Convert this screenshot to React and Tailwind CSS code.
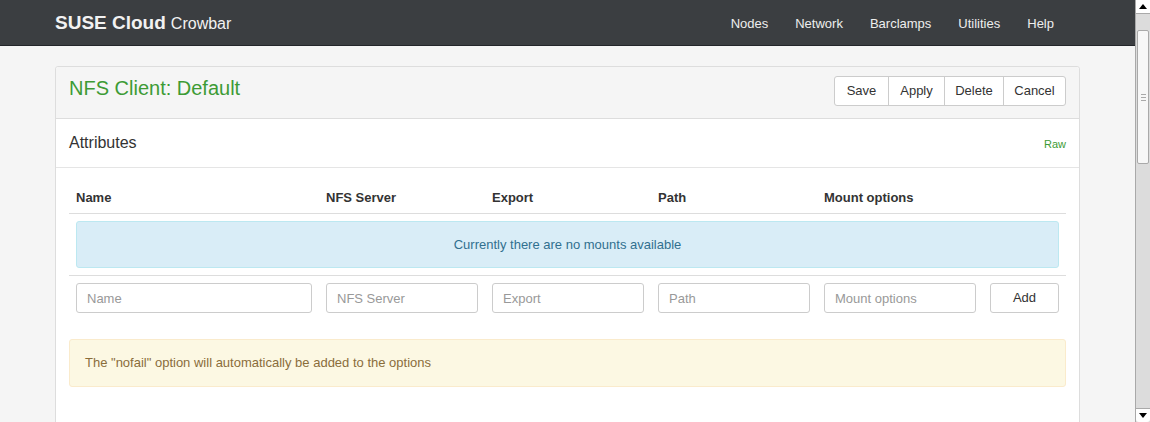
import React from 'react';

const navLinks = ['Nodes', 'Network', 'Barclamps', 'Utilities', 'Help'];

const columns = [
    { label: 'Name', width: 'w-[250px]' },
    { label: 'NFS Server', width: 'w-[166px]' },
    { label: 'Export', width: 'w-[166px]' },
    { label: 'Path', width: 'w-[166px]' },
    { label: 'Mount options', width: 'w-[166px]' },
];

const Scrollbar = () => (
    <div className="w-[15px] h-full flex flex-col bg-[#dcdcdc] border-l border-[#a9a9a9]">
        <div className="h-[14px] bg-white border-b border-[#a9a9a9] flex items-center justify-center">
            <div className="w-0 h-0 border-l-[4px] border-r-[4px] border-b-[5px] border-l-transparent border-r-transparent border-b-black" />
        </div>
        <div className="h-[16px]" />
        <div className="h-[134px] mx-[1px] bg-[#f7f7f7] border border-[#a9a9a9] rounded-[2px] flex flex-col items-center justify-center gap-[2px]">
            <div className="w-[5px] h-px bg-[#a9a9a9]" />
            <div className="w-[5px] h-px bg-[#a9a9a9]" />
            <div className="w-[5px] h-px bg-[#a9a9a9]" />
        </div>
        <div className="flex-1" />
        <div className="h-[14px] bg-white border-t border-[#a9a9a9] rounded-b-[3px] flex items-center justify-center">
            <div className="w-0 h-0 border-l-[4px] border-r-[4px] border-t-[5px] border-l-transparent border-r-transparent border-t-black" />
        </div>
    </div>
);

const App = () => {
    return (
        <div className="h-screen flex overflow-hidden bg-[#f5f5f5] font-['Liberation_Sans',Arial,sans-serif] text-[13px] text-[#333]">
            <div className="flex-1 overflow-hidden">
                <div className="h-[46px] bg-[#3b3e41] border-b border-[#23262a]">
                    <div className="w-[1025px] mx-auto h-full pt-[2px] flex items-center justify-between">
                        <div className="flex items-baseline text-[#f2f2f2]">
                            <span className="text-[19px] font-bold">SUSE Cloud</span>
                            <span className="text-[16px] ml-[5px]">Crowbar</span>
                        </div>
                        <div className="flex gap-[27px] pr-[26px] text-[13px] text-[#eeeeee]">
                            {navLinks.map((link) => (
                                <a key={link} href="#" className="hover:text-white">
                                    {link}
                                </a>
                            ))}
                        </div>
                    </div>
                </div>

                <div className="w-[1025px] mx-auto mt-[20px] bg-white border border-[#dddddd] rounded-[3px]">
                    <div className="h-[52px] bg-[#f5f5f5] border-b border-[#dddddd] px-[13px] pt-[9px] flex items-start justify-between rounded-t-[3px]">
                        <h1 className="text-[20px] leading-[24px] text-[#3d9b35]">NFS Client: Default</h1>
                        <div className="flex h-[30px] border border-[#cccccc] rounded-[3px] bg-white">
                            <button className="w-[53px] text-[13px]">Save</button>
                            <button className="w-[56px] text-[13px] border-l border-[#cccccc]">Apply</button>
                            <button className="w-[59px] text-[13px] border-l border-[#cccccc]">Delete</button>
                            <button className="w-[62px] text-[13px] border-l border-[#cccccc]">Cancel</button>
                        </div>
                    </div>

                    <div className="h-[49px] border-b border-[#e5e5e5] px-[13px] flex items-center justify-between">
                        <h2 className="text-[16px]">Attributes</h2>
                        <a href="#" className="text-[11px] text-[#3d9b35] mt-[3px]">
                            Raw
                        </a>
                    </div>

                    <div className="px-[13px] pt-[15px] pb-[40px]">
                        <div className="flex h-[31px] items-center border-b border-[#dddddd] font-bold">
                            {columns.map((col) => (
                                <div key={col.label} className={`${col.width} px-[7px]`}>
                                    {col.label}
                                </div>
                            ))}
                        </div>
                        <div className="p-[7px] border-b border-[#dddddd]">
                            <div className="h-[47px] bg-[#d9edf7] border border-[#bce8f1] rounded-[3px] flex items-center justify-center text-[#31708f]">
                                Currently there are no mounts available
                            </div>
                        </div>
                        <div className="flex py-[7px]">
                            {columns.map((col) => (
                                <div key={col.label} className={`${col.width} px-[7px]`}>
                                    <input
                                        placeholder={col.label}
                                        className="w-full h-[30px] px-[10px] border border-[#cccccc] rounded-[3px] text-[13px] placeholder:text-[#999999] outline-none"
                                    />
                                </div>
                            ))}
                            <div className="flex-1 px-[7px]">
                                <button className="w-full h-[30px] border border-[#cccccc] rounded-[3px] text-[13px]">
                                    Add
                                </button>
                            </div>
                        </div>
                        <div className="mt-[19px] h-[48px] bg-[#fcf8e3] border border-[#faebcc] rounded-[3px] px-[15px] flex items-center text-[#8a6d3b]">
                            The "nofail" option will automatically be added to the options
                        </div>
                    </div>
                </div>
            </div>
            <Scrollbar />
        </div>
    );
};

export default App;
